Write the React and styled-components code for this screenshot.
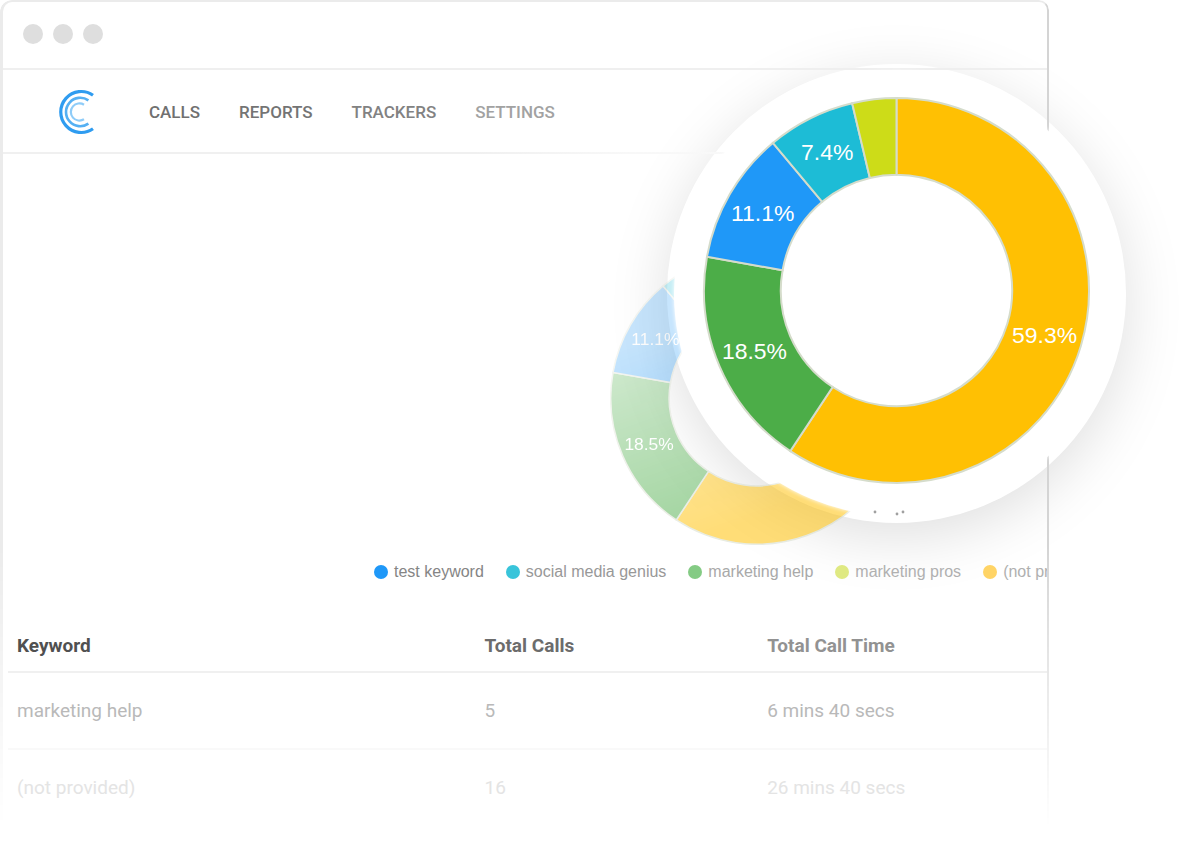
import React from 'react';
import styled, { createGlobalStyle } from 'styled-components';

const GlobalStyle = createGlobalStyle`
    body {
        margin: 0;
        background: #fff;
        font-family: Roboto, sans-serif;
    }
`;

const Page = styled.div`
    position: relative;
    overflow: hidden;
    padding: 0 151px 36px 0;
`;

const Window = styled.main`
    position: relative;
    z-index: 1;
    overflow: hidden;
    padding: 2px 2px 0 3px;

    &::before {
        content: '';
        position: absolute;
        inset: 0;
        border: solid #ebebeb;
        border-width: 2px 2px 0 3px;
        border-right-color: #d4d4d4;
        border-radius: 12px 10px 0 0;
        mask-image: linear-gradient(#000 66%, transparent);
        pointer-events: none;
    }
`;

const TitleBar = styled.div`
    display: flex;
    align-items: center;
    gap: 10px;
    box-sizing: border-box;
    height: 68px;
    padding: 0 0 2px 20px;
    border-bottom: 2px solid #efefef;
`;

const WindowDot = styled.span`
    width: 20px;
    height: 20px;
    border-radius: 50%;
    background: #dedede;
`;

const Header = styled.header`
    display: flex;
    align-items: center;
    box-sizing: border-box;
    height: 84px;
    padding: 2px 0 0 54px;
    border-bottom: 2px solid;
    border-image: linear-gradient(to right, #f0f0f0 45%, #f8f8f8 60%, #fafafa) 1;
`;

const Nav = styled.nav`
    display: flex;
    gap: 39px;
    margin-left: 54px;
`;

const NavLink = styled.a`
    color: ${props => props.$color};
    font-size: 17px;
    font-weight: 500;
    line-height: 24px;
    text-decoration: none;
`;

const Report = styled.section`
    padding-top: 97px;
`;

const PageChart = styled.div`
    width: 294px;
    height: 294px;
    margin-left: 607px;
    mask-image: linear-gradient(160deg, rgba(0, 0, 0, 0.25) 25%, rgba(0, 0, 0, 0.54) 80%);
`;

const DonutSvg = styled.svg`
    display: block;
    width: 100%;
    height: 100%;
    overflow: visible;
`;

const SliceLabel = styled.text`
    fill: #fff;
    font-family: 'Liberation Sans', Arial, sans-serif;
    font-size: 23px;
    text-anchor: middle;
`;

const Legend = styled.ul`
    display: flex;
    gap: 22px;
    margin: 17px 0 38px;
    padding: 0 0 0 371px;
    overflow: hidden;
    list-style: none;
`;

const LegendItem = styled.li`
    display: flex;
    flex: none;
    align-items: center;
    gap: 6px;
    color: ${props => props.$color};
    font-family: 'Liberation Sans', Arial, sans-serif;
    font-size: 16px;
    line-height: 20px;
    white-space: nowrap;
`;

const LegendDot = styled.span`
    width: 14px;
    height: 14px;
    border-radius: 50%;
    background: ${props => props.$color};
`;

const CallTable = styled.table`
    width: calc(100% - 5px);
    margin-left: 5px;
    border-collapse: collapse;
    table-layout: fixed;
    font-size: 19px;
    line-height: 24px;
    text-align: left;
`;

const HeadCell = styled.th`
    box-sizing: border-box;
    width: ${props => props.$width};
    height: 52px;
    padding: 0 0 0 9px;
    border-bottom: 2px solid #f0f0f0;
    color: ${props => props.$color};
    font-weight: 700;
`;

const Cell = styled.td`
    height: 75px;
    padding: 0 0 0 9px;
    border-bottom: 2px solid ${props => props.$line};
    color: ${props => props.$color};
`;

const Lens = styled.div`
    position: absolute;
    top: 64px;
    right: 74px;
    width: 459px;
    height: 459px;
    border-radius: 50%;
    background: #fff;
    box-shadow: 0 14px 60px rgba(0, 0, 0, 0.13);
`;

const LensGlass = styled.div`
    position: absolute;
    z-index: 2;
    top: 71px;
    right: 81px;
    box-sizing: border-box;
    width: 445px;
    height: 445px;
    padding: 26px 29px 32px;
    border-radius: 50%;
    background: #fff;
    box-shadow: 0 0 4px #fff;
`;

const Specks = styled.svg`
    display: block;
    margin: 24px auto 0;
`;

const slices = [
    { value: 59.3, color: '#ffc003', label: '59.3%' },
    { value: 18.5, color: '#4cad48', label: '18.5%' },
    { value: 11.1, color: '#1f98f8', label: '11.1%' },
    { value: 7.4, color: '#1dbcd6', label: '7.4%' },
    { value: 3.7, color: '#cddc18' },
];

const legend = [
    { name: 'test keyword', dot: '#1f98f8', color: '#858585' },
    { name: 'social media genius', dot: '#38c4da', color: '#989898' },
    { name: 'marketing help', dot: '#84cb84', color: '#a9a9a9' },
    { name: 'marketing pros', dot: '#dfe982', color: '#b0b0b0' },
    { name: '(not provided)', dot: '#ffd466', color: '#b0b0b0' },
];

const links = [
    { name: 'CALLS', color: '#707070' },
    { name: 'REPORTS', color: '#747474' },
    { name: 'TRACKERS', color: '#828282' },
    { name: 'SETTINGS', color: '#a2a2a2' },
];

const columns = [
    { name: 'Keyword', width: '45%', color: '#505050' },
    { name: 'Total Calls', width: '27.2%', color: '#6c6c6c' },
    { name: 'Total Call Time', width: 'auto', color: '#929292' },
];

const rows = [
    { cells: ['marketing help', '5', '6 mins 40 secs'], color: '#b9b9b9', line: '#f9f9f9' },
    { cells: ['(not provided)', '16', '26 mins 40 secs'], color: '#e4e4e4', line: 'transparent' },
];

const CENTER = 194;
const OUTER = 193;
const INNER = 116;

const point = (radius, share) => {
    const angle = share / 100 * Math.PI * 2;
    return [CENTER + radius * Math.sin(angle), CENTER - radius * Math.cos(angle)];
};

const slicePath = (start, end) => {
    const large = end - start > 50 ? 1 : 0;
    return `M${point(OUTER, start)} A${OUTER} ${OUTER} 0 ${large} 1 ${point(OUTER, end)}
        L${point(INNER, end)} A${INNER} ${INNER} 0 ${large} 0 ${point(INNER, start)} Z`;
};

const Donut = () => {
    let total = 0;
    const parts = slices.map(slice => {
        const start = total;
        total += slice.value;
        return { ...slice, start, end: total, middle: point(155, start + slice.value / 2) };
    });

    return (
        <DonutSvg viewBox="0 0 388 388" role="img" aria-label="Calls by keyword">
            {parts.map(part => (
                <path key={part.color} d={slicePath(part.start, part.end)} fill={part.color} stroke="#d5dccb" strokeWidth="2"/>
            ))}
            {parts.filter(part => part.label).map(part => (
                <SliceLabel key={part.label} x={part.middle[0]} y={part.middle[1] + 8}>{part.label}</SliceLabel>
            ))}
        </DonutSvg>
    );
};

const Logo = () => (
    <svg width="38" height="46" viewBox="0 0 38 46" fill="none" aria-hidden="true">
        <path d="M36 6.2A20.5 20.5 0 1 0 36 39.8" stroke="#2f9cf0" strokeWidth="3.2"/>
        <path d="M31.4 11.4A14.2 14.2 0 1 0 31.4 34.6" stroke="#55b0f3" strokeWidth="2.6"/>
        <path d="M27 15.7A8.6 8.6 0 1 0 27 30.3" stroke="#8fccf8" strokeWidth="2.2"/>
    </svg>
);

const App = () => (
    <Page>
        <GlobalStyle/>
        <Lens/>
        <Window>
            <TitleBar>
                <WindowDot/>
                <WindowDot/>
                <WindowDot/>
            </TitleBar>
            <Header>
                <Logo/>
                <Nav>
                    {links.map(link => (
                        <NavLink key={link.name} href="#" $color={link.color}>{link.name}</NavLink>
                    ))}
                </Nav>
            </Header>
            <Report>
                <PageChart>
                    <Donut/>
                </PageChart>
                <Legend>
                    {legend.map(item => (
                        <LegendItem key={item.name} $color={item.color}>
                            <LegendDot $color={item.dot}/>
                            {item.name}
                        </LegendItem>
                    ))}
                </Legend>
                <CallTable>
                    <thead>
                        <tr>
                            {columns.map(column => (
                                <HeadCell key={column.name} $width={column.width} $color={column.color}>{column.name}</HeadCell>
                            ))}
                        </tr>
                    </thead>
                    <tbody>
                        {rows.map(row => (
                            <tr key={row.cells[0]}>
                                {row.cells.map(cell => (
                                    <Cell key={cell} $color={row.color} $line={row.line}>{cell}</Cell>
                                ))}
                            </tr>
                        ))}
                    </tbody>
                </CallTable>
            </Report>
        </Window>
        <LensGlass>
            <Donut/>
            <Specks width="48" height="8" viewBox="0 0 48 8" fill="#a0a0a0" aria-hidden="true">
                <circle cx="2" cy="4" r="1.4"/>
                <circle cx="24" cy="6" r="1.4"/>
                <circle cx="30" cy="4" r="1.4"/>
            </Specks>
        </LensGlass>
    </Page>
);

export default App;
